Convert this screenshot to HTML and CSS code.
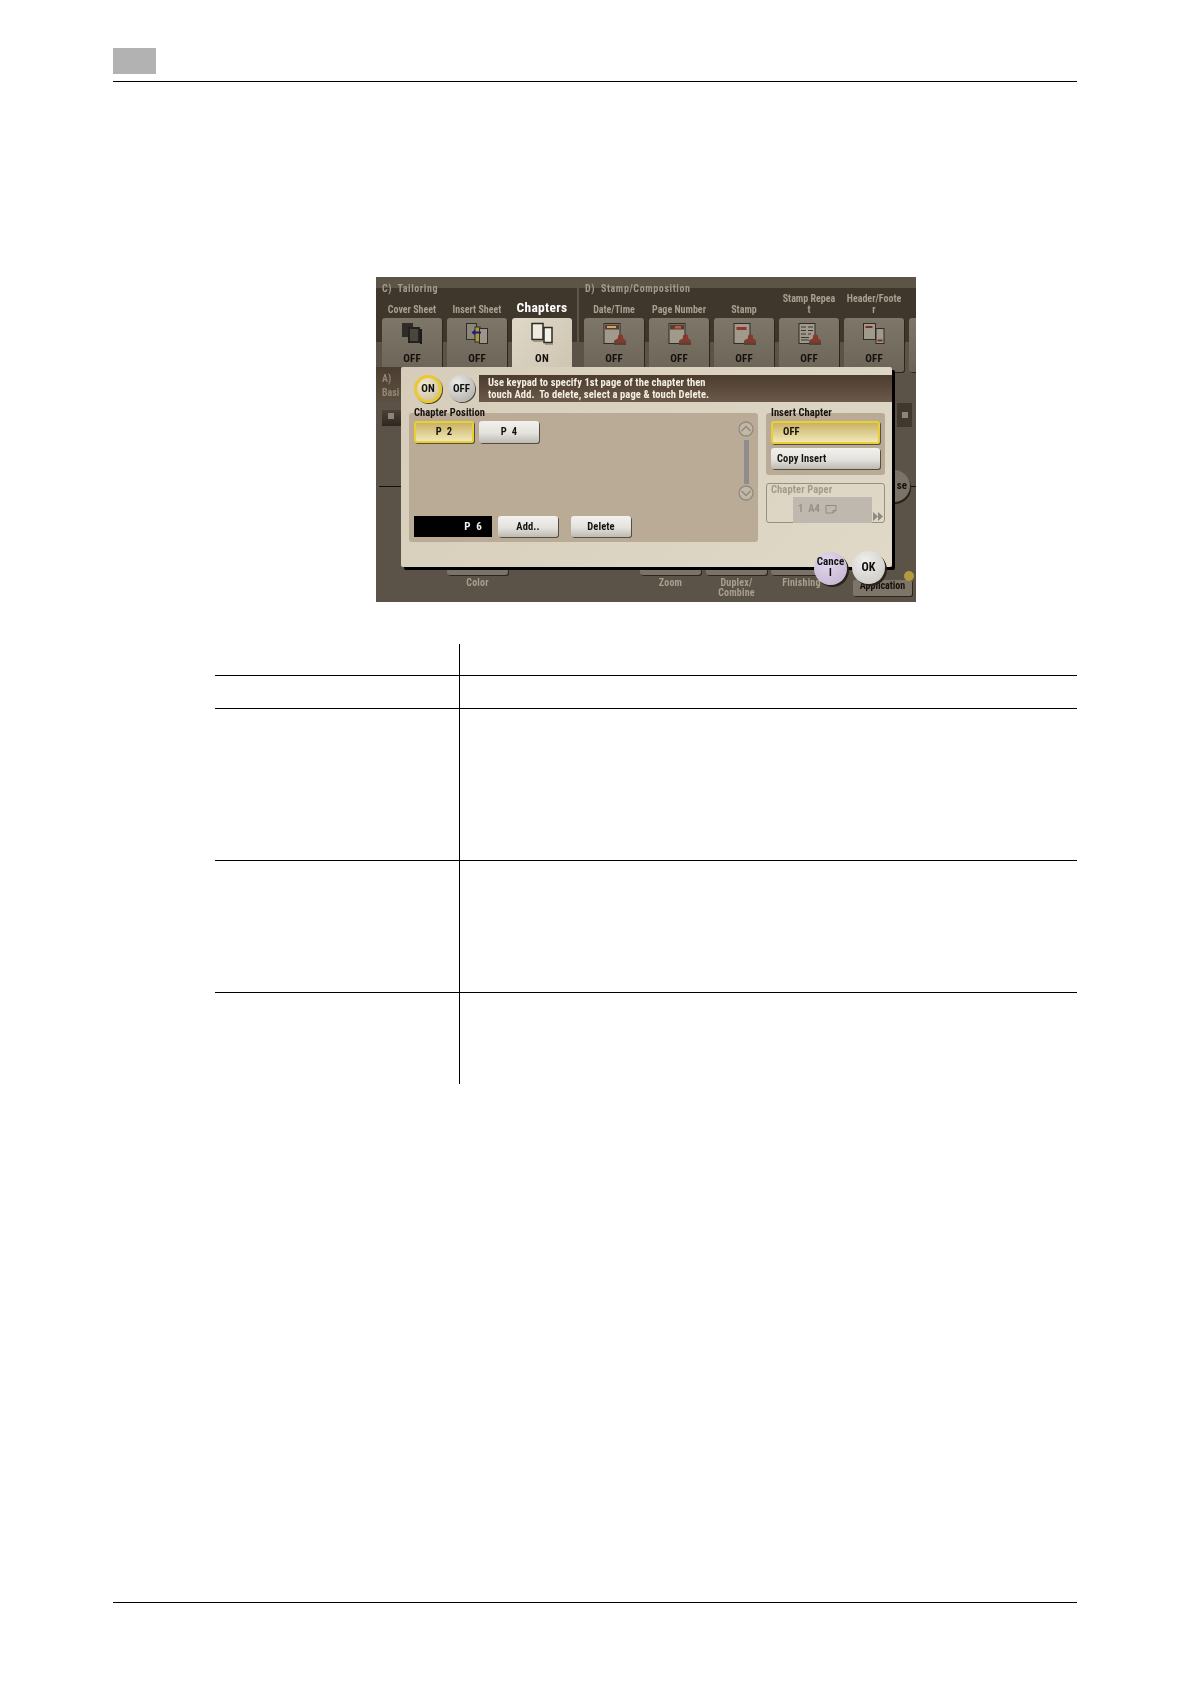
FILE: index.html
```html
<!DOCTYPE html>
<html lang="en">
<head>
<meta charset="utf-8">
<title>Chapters</title>
<link rel="stylesheet" href="styles.css">
</head>
<body>
<svg class="defs" width="0" height="0" aria-hidden="true">
  <defs>
    <symbol id="stamp" viewBox="0 0 24 24">
      <path d="M12 22.500v-3c0-1.500 1-2 3-2.500 1-.5 1-1.500 1-3 0-2 5-2 5 0 0 1.500 0 2.500 1 3 1.500.5 2 1 2 2.500v3z" fill="#853a30"/>
      <rect x="12" y="20.500" width="12" height="2.500" fill="#5a4232"/>
    </symbol>
  </defs>
</svg>
<div class="page">
  <header class="page-head">
    <div class="chapter-tab"></div>
  </header>

  <figure class="screen">
    <div class="tabs">
      <section class="group group-c">
        <h3 class="group-title">C)&nbsp; Tailoring</h3>
        <div class="tile-row">
          <div class="tab">
            <div class="tab-label">Cover Sheet</div>
            <div class="tile">
              <svg class="tile-icon" viewBox="0 0 24 24"><rect x="2" y="1" width="11" height="14" fill="#2f2b26"/><rect x="8" y="5" width="12" height="16" fill="#25221e"/><rect x="10" y="7" width="8" height="12" fill="#4a453d"/><rect x="20" y="7" width="2" height="15" fill="#1c1a17"/></svg>
              <span class="tile-state">OFF</span>
            </div>
          </div>
          <div class="tab">
            <div class="tab-label">Insert Sheet</div>
            <div class="tile">
              <svg class="tile-icon" viewBox="0 0 24 24"><rect x="1.500" y="1.500" width="10" height="16" fill="#8d877b" stroke="#2f2b26"/><rect x="10" y="5" width="5" height="15" fill="#a89a3c" stroke="#2f2b26"/><rect x="14.500" y="6.500" width="8" height="15" fill="#9c968a" stroke="#2f2b26"/><path d="M16 9.500H10V7.500L6.500 10.500 10 13.500V11.500H16z" fill="#1c1c7c"/></svg>
              <span class="tile-state">OFF</span>
            </div>
          </div>
          <div class="tab">
            <div class="tab-label tab-label-active">Chapters</div>
            <div class="tile tile-active">
              <svg class="tile-icon" viewBox="0 0 24 24"><rect x="2" y="1.500" width="11" height="16" fill="#eeeae0" stroke="#2c2a26" stroke-width="1.500"/><rect x="14" y="5.500" width="8" height="15" fill="#f3f0e8" stroke="#2c2a26" stroke-width="1.500"/><path d="M3 19h10M15 22h8" stroke="#6e6a60"/></svg>
              <span class="tile-state">ON</span>
            </div>
          </div>
        </div>
      </section>
      <div class="group-sep"></div>
      <section class="group group-d">
        <h3 class="group-title">D)&nbsp; Stamp/Composition</h3>
        <div class="tile-row">
          <div class="tab">
            <div class="tab-label">Date/Time</div>
            <div class="tile">
              <svg class="tile-icon" viewBox="0 0 24 24"><rect x="2" y="1.500" width="16" height="20" fill="#a09a8c" stroke="#2f2b26"/><rect x="3" y="2.500" width="14" height="5" fill="#5a3d2e"/><rect x="5" y="4" width="9" height="2" fill="#c8a86a"/><use href="#stamp"/></svg>
              <span class="tile-state">OFF</span>
            </div>
          </div>
          <div class="tab">
            <div class="tab-label">Page Number</div>
            <div class="tile">
              <svg class="tile-icon" viewBox="0 0 24 24"><rect x="2" y="1.500" width="16" height="20" fill="#a09a8c" stroke="#2f2b26"/><rect x="3" y="2.500" width="14" height="5" fill="#5a3d2e"/><rect x="8" y="4" width="6" height="2.500" fill="#c05a40"/><use href="#stamp"/></svg>
              <span class="tile-state">OFF</span>
            </div>
          </div>
          <div class="tab">
            <div class="tab-label">Stamp</div>
            <div class="tile">
              <svg class="tile-icon" viewBox="0 0 24 24"><rect x="2" y="1.500" width="16" height="20" fill="#a09a8c" stroke="#2f2b26"/><rect x="4.500" y="5" width="10" height="3" fill="#94342c"/><use href="#stamp"/></svg>
              <span class="tile-state">OFF</span>
            </div>
          </div>
          <div class="tab">
            <div class="tab-label">Stamp Repea<br>t</div>
            <div class="tile">
              <svg class="tile-icon" viewBox="0 0 24 24"><rect x="2" y="1.500" width="16" height="20" fill="#a09a8c" stroke="#2f2b26"/><path d="M4 5h5M11 5h5M4 8.500h5M11 8.500h5M4 12h5M11 12h3M4 15.500h8M4 18h8" stroke="#3a352d" stroke-width="1.200"/><use href="#stamp"/></svg>
              <span class="tile-state">OFF</span>
            </div>
          </div>
          <div class="tab">
            <div class="tab-label">Header/Foote<br>r</div>
            <div class="tile">
              <svg class="tile-icon" viewBox="0 0 24 24"><rect x="1.500" y="1.500" width="12" height="16" fill="#a09a8c" stroke="#2f2b26"/><rect x="3.500" y="4" width="7" height="2" fill="#7a2d28"/><rect x="14" y="6.500" width="8" height="15" fill="#a09a8c" stroke="#2f2b26"/><rect x="15.500" y="17.500" width="5" height="2" fill="#7a2d28"/></svg>
              <span class="tile-state">OFF</span>
            </div>
          </div>
          <div class="tab">
            <div class="tab-label">&nbsp;</div>
            <div class="tile"></div>
          </div>
        </div>
      </section>
    </div>

    <div class="mid">
      <div class="mid-left">
        <div class="basic-tab">A)<br>Basi</div>
        <div class="basic-key"><span class="key-dot"></span></div>
        <div class="mid-line"></div>
      </div>
      <div class="mid-right">
        <div class="mid-key"><span class="key-dot"></span></div>
        <div class="close-row">
          <div class="close-disc">se</div>
          <div class="close-line"></div>
        </div>
      </div>
    </div>

    <div class="foot">
      <div class="foot-item foot-color"><div class="foot-key"></div><span>Color</span></div>
      <div class="foot-item foot-zoom"><div class="foot-key"></div><span>Zoom</span></div>
      <div class="foot-item"><div class="foot-key"></div><span>Duplex/<br>Combine</span></div>
      <div class="foot-item"><div class="foot-key"></div><span>Finishing</span></div>
      <div class="app-key">Application<span class="app-led"></span></div>
    </div>

    <div class="dialog">
      <div class="dialog-top">
        <button class="disc disc-on">ON</button>
        <button class="disc disc-off">OFF</button>
        <p class="hint">Use keypad to specify 1st page of the chapter then<br>touch Add.&nbsp; To delete, select a page &amp; touch Delete.</p>
      </div>
      <div class="dialog-body">
        <div class="panel panel-pos">
          <div class="pos-main">
            <div class="panel-title">Chapter Position</div>
            <div class="pos-pages">
              <button class="key key-page key-sel">P&nbsp; 2</button>
              <button class="key key-page">P&nbsp; 4</button>
            </div>
            <div class="pos-entry">
              <div class="entry-box">P&nbsp; 6</div>
              <button class="key key-page key-add">Add..</button>
              <button class="key key-page">Delete</button>
            </div>
          </div>
          <div class="scroll">
            <svg class="scroll-btn" viewBox="0 0 16 16"><circle cx="8" cy="8" r="7" fill="#c4b7a4" stroke="#8f8a82" stroke-width="1.300"/><path d="M3.500 10L8 5.500 12.500 10" fill="none" stroke="#8f8a82" stroke-width="1.500"/></svg>
            <div class="scroll-bar"></div>
            <svg class="scroll-btn" viewBox="0 0 16 16"><circle cx="8" cy="8" r="7" fill="#c4b7a4" stroke="#8f8a82" stroke-width="1.300"/><path d="M3.500 6L8 10.500 12.500 6" fill="none" stroke="#8f8a82" stroke-width="1.500"/></svg>
          </div>
        </div>
        <div class="dialog-side">
          <div class="panel panel-ins">
            <div class="panel-title">Insert Chapter</div>
            <button class="key key-wide key-sel key-off">OFF</button>
            <button class="key key-wide key-copy">Copy Insert</button>
          </div>
          <div class="paper-box">
            <div class="paper-title">Chapter Paper</div>
            <div class="paper-val">
              <span class="paper-text">1&nbsp; A4</span>
              <svg class="paper-icon" viewBox="0 0 12 10"><path d="M1 1.500h10v5L8 9H1z" fill="none" stroke="#8f8a82"/><path d="M8 9V6.500h3" fill="none" stroke="#8f8a82"/></svg>
            </div>
            <svg class="paper-more" viewBox="0 0 10 9"><path d="M0 0l5 4.500L0 9zM5 0l5 4.500L5 9z" fill="#8f8a82"/></svg>
          </div>
        </div>
      </div>
      <button class="disc disc-cancel">Cance<br>l</button>
      <button class="disc disc-ok">OK</button>
    </div>
  </figure>

  <div class="table">
    <div class="cell cell-first h-head"></div><div class="cell h-head"></div>
    <div class="cell cell-first h-row1"></div><div class="cell h-row1"></div>
    <div class="cell cell-first h-row2"></div><div class="cell h-row2"></div>
    <div class="cell cell-first h-row3"></div><div class="cell h-row3"></div>
    <div class="cell cell-first cell-last h-row4"></div><div class="cell cell-last h-row4"></div>
  </div>

  <footer class="page-foot"></footer>
</div>
</body>
</html>
```

FILE: styles.css
```css
* { box-sizing: border-box; }
html, body { margin: 0; padding: 0; background: #fff; }
.defs { position: absolute; }
.page { width: 1190px; height: 1684px; padding: 48px 113px 0; }

/* page header */
.page-head { height: 34px; border-bottom: 1px solid #000; }
.chapter-tab { width: 43px; height: 26px; background: #b2b2b2; }

/* embedded panel screenshot */
.screen {
  position: relative;
  width: 540px;
  height: 325px;
  margin: 195px 0 0 263px;
  overflow: hidden;
  display: flex;
  flex-direction: column;
  font-family: "Roboto Condensed", "Liberation Sans Narrow", Roboto, sans-serif;
  font-stretch: 75%;
  font-weight: 700;
  filter: blur(.3px);
  background: linear-gradient(to bottom, #5d5448 0 11px, #3f362c 11px 65px, #5b5347 65px);
}
.tabs { display: flex; padding-left: 6px; height: 95px; flex: none; }
.group { flex: none; }
.group-title {
  margin: 0;
  height: 22px;
  padding: 6px 0 0 0;
  font-size: 10px;
  line-height: 11px;
  font-weight: 700;
  letter-spacing: .6px;
  color: #a39b8b;
}
.group-d .group-title { padding-left: 1px; }
.group-sep { width: 2px; height: 65px; margin: 0 5px; flex: none; background: #5f564a; }
.tile-row { display: flex; gap: 5px; }
.tab { width: 60px; flex: none; }
.tab-label {
  height: 19px;
  display: flex;
  align-items: flex-end;
  justify-content: center;
  text-align: center;
  font-size: 10px;
  line-height: 11px;
  letter-spacing: 0;
  color: #a89f8f;
  white-space: nowrap;
  padding-bottom: 3px;
}
.tab-label-active { font-size: 13.500px; color: #fff; letter-spacing: .3px; line-height: 14px; padding-bottom: 4px; }
.tile {
  height: 54px;
  border-radius: 3px;
  background: linear-gradient(to bottom, #7e7668, #6c6457);
  box-shadow: 1px 1px 0 #2d261e;
  display: flex;
  flex-direction: column;
  align-items: center;
  padding-top: 4px;
}
.tile-active { background: linear-gradient(135deg, #e0d8c8, #cdc4b1); box-shadow: none; }
.tile-icon { width: 24px; height: 24px; display: block; }
.tile-state { margin-top: 6px; font-size: 11px; line-height: 13px; letter-spacing: .2px; color: #14110d; }

.mid { height: 195px; display: flex; justify-content: space-between; flex: none; }
.mid-left { width: 25px; }
.basic-tab {
  height: 35px;
  margin-top: -5px;
  padding: 5px 0 0 6px;
  overflow: hidden;
  white-space: nowrap;
  font-size: 10px;
  line-height: 14px;
  letter-spacing: 0;
  color: #8f8778;
  background: linear-gradient(to bottom, #4b3d30, #5e5040);
}
.basic-key {
  height: 16px;
  margin: 8px 0 0 6px;
  padding: 3px 0 0 6px;
  background: linear-gradient(to bottom, #4d4237, #2f271f);
}
.key-dot { display: block; width: 6px; height: 6px; background: #8d8577; }
.mid-line { height: 1px; margin: 60px 0 0 3px; background: #111; }
.mid-right { width: 21px; }
.mid-key {
  width: 15px;
  height: 24px;
  margin: 31px 0 0 2px;
  padding: 9px 0 0 5px;
  background: #40372d;
}
.close-row { display: flex; align-items: center; margin: 43px 0 0 -17px; }
.close-disc {
  width: 32px;
  height: 32px;
  flex: none;
  border-radius: 50%;
  background: #7b7367;
  box-shadow: 1px 2px 0 #28221b;
  text-align: right;
  padding-right: 3px;
  font-size: 11px;
  line-height: 32px;
  color: #14110d;
}
.close-line { width: 6px; height: 1px; background: #111; }

.foot { display: flex; flex: 1; padding-left: 71px; position: relative; }
.foot-item { width: 61px; margin-right: 4px; text-align: center; font-size: 10px; line-height: 10px; letter-spacing: .2px; color: #a89f8f; }
.foot-color { margin-right: 132px; }
.foot-zoom { margin-right: 5px; }
.foot-key { height: 8px; margin-bottom: 3px; background: #7b7367; box-shadow: 1px 1px 0 #2d261e; border-radius: 0 0 3px 3px; }
.app-key {
  position: absolute;
  left: 477px;
  top: 13px;
  width: 59px;
  height: 16px;
  border-radius: 2px;
  background: #7d7568;
  box-shadow: 1px 1px 0 #2d261e;
  text-align: center;
  font-size: 10px;
  line-height: 12px;
  letter-spacing: 0;
  color: #14110d;
}
.app-led {
  position: absolute;
  right: -2px;
  top: -9px;
  width: 10px;
  height: 10px;
  border-radius: 50%;
  background: #b59a3d;
}

/* dialog */
.dialog {
  position: absolute;
  left: 25px;
  top: 90px;
  width: 491px;
  height: 200px;
  padding: 8px 0 0 8px;
  border-radius: 2px;
  background: linear-gradient(135deg, #d6ccb9, #e0d9c8);
  box-shadow: 3px 3px 0 #000;
}
.dialog-top { display: flex; align-items: center; height: 27px; padding-left: 5px; }
.disc {
  border: 0;
  padding: 0;
  border-radius: 50%;
  font-family: inherit;
  font-stretch: inherit;
  font-weight: 700;
  font-size: 11px;
  color: #111;
  flex: none;
}
.disc-on {
  width: 28px;
  height: 28px;
  border: 3px solid #e8c92f;
  background: radial-gradient(circle at 35% 30%, #f2e9cf, #cbbd9c);
  box-shadow: 1px 1px 0 #4a4233;
}
.disc-off {
  width: 27px;
  height: 27px;
  margin-left: 6px;
  background: radial-gradient(circle at 35% 30%, #ecebe8, #a8a6a2);
  box-shadow: 1px 1px 0 #4a4233;
}
.hint {
  flex: 1;
  height: 27px;
  margin: 0 0 0 4px;
  padding: 2px 0 0 9px;
  font-size: 10.500px;
  line-height: 11.500px;
  letter-spacing: .1px;
  color: #f4efe2;
  white-space: nowrap;
  background: linear-gradient(to bottom, #4c3c2e, #6b5a4a);
}
.dialog-body { display: flex; gap: 8px; margin-top: 11px; }
.panel { background: #baab97; border-radius: 3px; }
.panel-pos { width: 349px; height: 129px; display: flex; padding: 0 4px 0 5px; }
.pos-main { flex: 1; display: flex; flex-direction: column; padding-bottom: 5px; }
.panel-title { height: 12px; margin-top: -6px; font-size: 10.500px; line-height: 12px; letter-spacing: .05px; color: #16120d; white-space: nowrap; }
.pos-pages { display: flex; gap: 5px; margin-top: 2px; }
.key {
  border: 0;
  padding: 0;
  font-family: inherit;
  font-stretch: inherit;
  font-weight: 700;
  font-size: 10.500px;
  letter-spacing: .1px;
  color: #16120d;
  border-radius: 3px;
  background: linear-gradient(to bottom, #f2f1ee, #e4e2dd 55%, #bdbab3);
  box-shadow: 1px 1px 0 #564c3f;
}
.key-page { width: 60px; height: 21px; }
.pos-pages .key-page { height: 22px; padding-bottom: 2px; }
.key-sel {
  background: linear-gradient(to bottom, #c9b264, #f2e7b8);
  border: 2px solid #e7cf35;
}
.pos-entry { display: flex; margin-top: auto; gap: 13px; }
.entry-box {
  width: 78px;
  height: 21px;
  margin-right: -7px;
  padding-right: 10px;
  background: #000;
  color: #f1f1f1;
  font-size: 11px;
  line-height: 21px;
  letter-spacing: .2px;
  text-align: right;
}
.scroll { width: 16px; margin-top: 8px; display: flex; flex-direction: column; align-items: center; }
.scroll-btn { width: 16px; height: 16px; display: block; flex: none; }
.scroll-bar { width: 5px; height: 44px; margin: 3px 0 1px; background: #8f8d8c; }

.dialog-side { width: 119px; }
.panel-ins { height: 62px; padding: 0 5px; display: flex; flex-direction: column; }
.key-wide { display: block; width: 109px; text-align: left; flex: none; }
.key-off { height: 23px; margin-top: 2px; padding: 0 0 3px 10px; }
.key-copy { height: 21px; margin-top: 4px; padding-left: 6px; }
.paper-box {
  position: relative;
  height: 40px;
  margin-top: 8px;
  border: 1px solid #97907f;
  border-radius: 3px;
  color: #a29a8b;
  font-size: 10.500px;
}
.paper-title { padding-left: 4px; line-height: 11px; letter-spacing: .1px; white-space: nowrap; }
.paper-val {
  display: flex;
  align-items: center;
  gap: 5px;
  width: 79px;
  height: 26px;
  margin: 2px 0 0 26px;
  padding: 0 0 3px 5px;
  background: #bfb8af;
  color: #989084;
}
.paper-icon { width: 12px; height: 10px; }
.paper-more { position: absolute; right: 1px; bottom: 1px; width: 10px; height: 9px; }
.disc-cancel, .disc-ok {
  position: absolute;
  width: 33px;
  height: 33px;
  line-height: 11.500px;
  letter-spacing: .1px;
  box-shadow: 2px 2px 0 #2a241c;
}
.disc-cancel {
  left: 413px;
  top: 185px;
  padding-bottom: 3px;
  background: radial-gradient(circle at 40% 30%, #e2d8ec, #c0b2d0);
}
.disc-ok {
  left: 451px;
  top: 184px;
  background: radial-gradient(circle at 40% 30%, #f0efec, #c6c4bf);
  font-size: 12px;
}

/* table rules */
.table {
  display: grid;
  grid-template-columns: 245px 617px;
  margin: 42px 0 0 102px;
  width: 862px;
}
.cell { border-top: 1px solid #000; }
.cell-first { border-right: 1px solid #000; }
.h-head { height: 31px; border-top: 0; }
.h-row1 { height: 33px; }
.h-row2 { height: 152px; }
.h-row3 { height: 132px; }
.h-row4 { height: 92px; }

.page-foot { margin-top: 518px; border-top: 1px solid #000; }
```
